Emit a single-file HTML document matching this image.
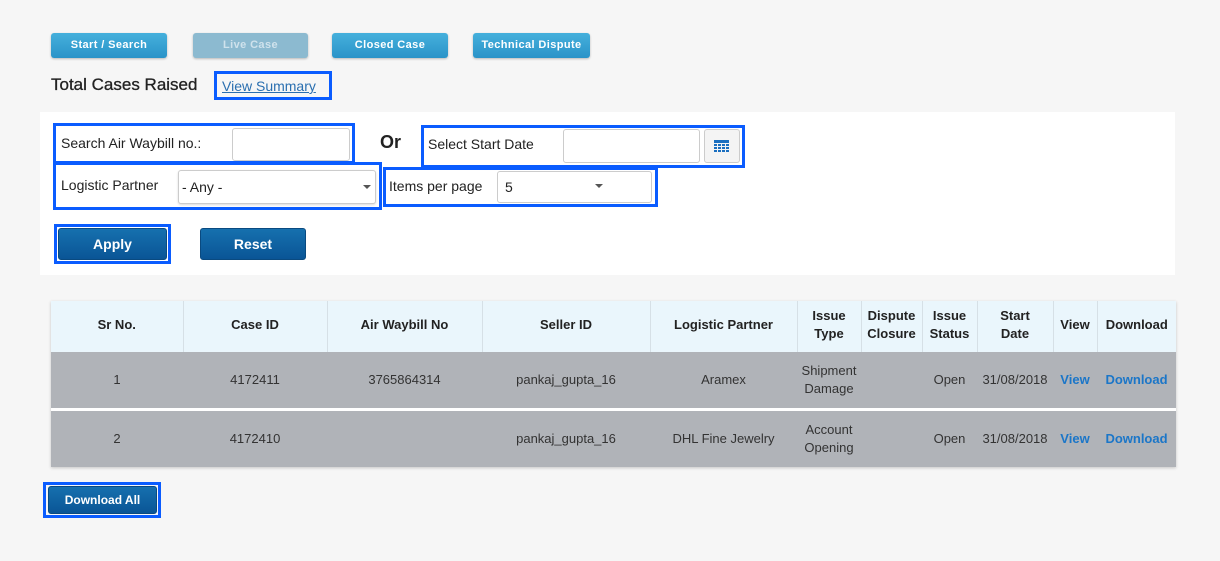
<!DOCTYPE html>
<html><head><meta charset="utf-8"><style>
*{box-sizing:border-box;margin:0;padding:0}
body{width:1220px;height:561px;background:#f6f6f6;font-family:"Liberation Sans",Arial,sans-serif;position:relative;overflow:hidden;color:#222}
.a{position:absolute}
.tb{position:absolute;top:33px;height:25px;border-radius:3px;background:linear-gradient(#45b0dc,#2a93c8);color:#fff;font-weight:bold;font-size:11px;text-align:center;line-height:25px;box-shadow:0 1px 2px rgba(0,0,0,.25);letter-spacing:.4px}
.hl{position:absolute;border:3px solid #0a5cff}
.inp{position:absolute;background:#fff;border:1px solid #ccc;border-radius:3px}
.btn{position:absolute;background:linear-gradient(#1670ae,#0a5596);color:#fff;font-weight:bold;font-size:14px;text-align:center;border-radius:3px;border:1px solid #0a4a80}
table{position:absolute;left:51px;top:301px;width:1125px;border-collapse:collapse;font-size:13px;box-shadow:0 1px 3px rgba(0,0,0,.2)}
th{background:#eaf6fc;height:51px;font-weight:bold;border-right:1px solid #d6e0e6;text-align:center;line-height:18px;color:#222;padding-bottom:3px}
td{background:#b0b3b8;height:57px;text-align:center;color:#333;line-height:18px}
tr.r2 td{border-top:3px solid #fff;height:58px}
td a{color:#1b76c8;font-weight:bold}
</style></head><body>
<div class="tb" style="left:51px;width:116px">Start / Search</div>
<div class="tb" style="left:193px;width:115px;background:#8cbad0;color:#cfe2ec">Live Case</div>
<div class="tb" style="left:332px;width:116px">Closed Case</div>
<div class="tb" style="left:473px;width:117px">Technical Dispute</div>

<div class="a" style="left:51px;top:75px;font-size:17px;color:#222;-webkit-text-stroke:0.3px #222">Total Cases Raised</div>
<div class="hl" style="left:214px;top:71px;width:118px;height:29px"></div>
<div class="a" style="left:222px;top:78px;font-size:14px;color:#2a6fb0;text-decoration:underline">View Summary</div>

<div class="a" style="left:40px;top:112px;width:1135px;height:163px;background:#fff"></div>

<div class="hl" style="left:53px;top:123px;width:302px;height:41px"></div>
<div class="a" style="left:61px;top:135px;font-size:14px">Search Air Waybill no.:</div>
<div class="inp" style="left:232px;top:128px;width:118px;height:33px"></div>
<div class="a" style="left:380px;top:132px;font-size:18px;font-weight:bold">Or</div>

<div class="hl" style="left:421px;top:125px;width:324px;height:43px"></div>
<div class="a" style="left:428px;top:136px;font-size:14px">Select Start Date</div>
<div class="inp" style="left:563px;top:129px;width:137px;height:34px"></div>
<div class="inp" style="left:704px;top:129px;width:36px;height:34px;background:#f4f4f4"></div>
<svg class="a" style="left:714px;top:140px" width="15" height="12"><rect width="15" height="3" fill="#1a6fc0"/><g fill="#1a6fc0"><rect x="0" y="4" width="3" height="2"/><rect x="4" y="4" width="3" height="2"/><rect x="8" y="4" width="3" height="2"/><rect x="12" y="4" width="3" height="2"/><rect x="0" y="7" width="3" height="2"/><rect x="4" y="7" width="3" height="2"/><rect x="8" y="7" width="3" height="2"/><rect x="12" y="7" width="3" height="2"/><rect x="0" y="10" width="3" height="2"/><rect x="4" y="10" width="3" height="2"/><rect x="8" y="10" width="3" height="2"/><rect x="12" y="10" width="3" height="2"/></g></svg>

<div class="hl" style="left:53px;top:162px;width:329px;height:48px"></div>
<div class="a" style="left:61px;top:177px;font-size:14px">Logistic Partner</div>
<div class="inp" style="left:178px;top:170px;width:198px;height:34px;box-shadow:0 1px 2px rgba(0,0,0,.15)"></div>
<div class="a" style="left:182px;top:179px;font-size:14px">- Any -</div>
<div class="a" style="left:363px;top:185px;border:4px solid transparent;border-top:4px solid #555"></div>

<div class="hl" style="left:383px;top:167px;width:275px;height:40px"></div>
<div class="a" style="left:389px;top:178px;font-size:14px">Items per page</div>
<div class="inp" style="left:497px;top:171px;width:155px;height:32px"></div>
<div class="a" style="left:505px;top:179px;font-size:14px">5</div>
<div class="a" style="left:595px;top:184px;border:4px solid transparent;border-top:4px solid #555"></div>

<div class="hl" style="left:54px;top:224px;width:117px;height:40px"></div>
<div class="btn" style="left:58px;top:228px;width:109px;height:32px;line-height:30px">Apply</div>
<div class="btn" style="left:200px;top:228px;width:106px;height:32px;line-height:30px">Reset</div>

<table>
<tr><th style="width:132px">Sr No.</th><th style="width:144px">Case ID</th><th style="width:155px">Air Waybill No</th><th style="width:168px">Seller ID</th><th style="width:147px">Logistic Partner</th><th style="width:64px">Issue<br>Type</th><th style="width:61px">Dispute<br>Closure</th><th style="width:55px">Issue<br>Status</th><th style="width:76px">Start<br>Date</th><th style="width:44px">View</th><th style="border-right:0">Download</th></tr>
<tr><td>1</td><td>4172411</td><td>3765864314</td><td>pankaj_gupta_16</td><td>Aramex</td><td>Shipment<br>Damage</td><td></td><td>Open</td><td>31/08/2018</td><td><a>View</a></td><td><a>Download</a></td></tr>
<tr class="r2"><td>2</td><td>4172410</td><td></td><td>pankaj_gupta_16</td><td>DHL Fine Jewelry</td><td>Account<br>Opening</td><td></td><td>Open</td><td>31/08/2018</td><td><a>View</a></td><td><a>Download</a></td></tr>
</table>

<div class="hl" style="left:43px;top:482px;width:118px;height:36px"></div>
<div class="btn" style="left:48px;top:486px;width:109px;height:28px;line-height:26px;font-size:12px">Download All</div>
</body></html>
